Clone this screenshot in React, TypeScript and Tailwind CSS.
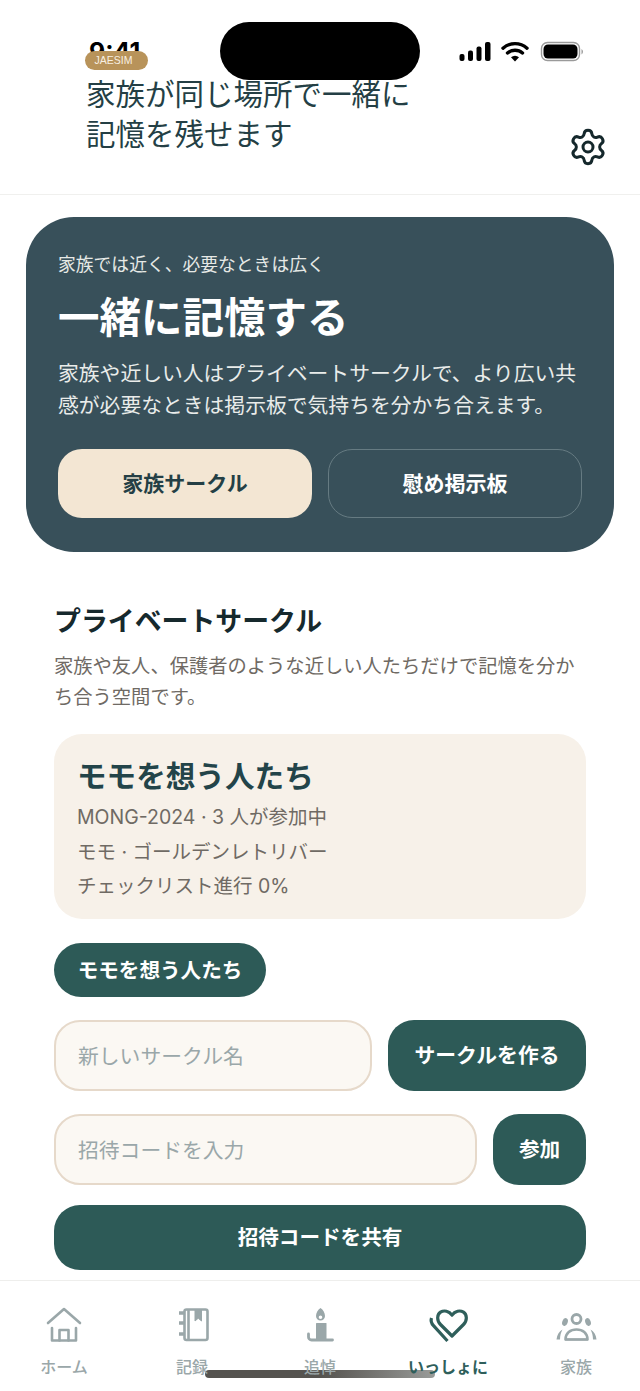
import { Settings } from "lucide-react";

const jp = "font-['Noto_Sans_CJK_JP','Noto_Sans',sans-serif]";

function StatusBar() {
  return (
    <div className="absolute inset-x-0 top-0 h-[80px]">
      {/* Time sits under the badge in the original capture */}
      <span className="absolute left-[89px] top-[37px] text-[25px] font-bold leading-[30px] text-black font-['Inter',sans-serif]">
        9:41
      </span>
      <div className="absolute left-[85px] top-[51px] flex h-[19px] w-[63px] items-center justify-center rounded-full bg-[#b8935a] pr-[6px]">
        <span className="text-[10.5px] leading-none text-[#f7efe2] font-['Liberation_Sans',sans-serif]">JAESIM</span>
      </div>
      <div className="absolute left-[220px] top-[22px] h-[58px] w-[200px] rounded-[29px] bg-black" />
      <svg className="absolute left-[458px] top-[40px]" width="128" height="24" viewBox="0 0 128 24" fill="black">
        <rect x="1.5" y="14" width="5" height="7" rx="2" />
        <rect x="10" y="10.5" width="5" height="10.5" rx="2" />
        <rect x="18.5" y="6.5" width="5" height="14.5" rx="2" />
        <rect x="27" y="2" width="5.5" height="19" rx="2" />
        <path d="M45 8.2a18 18 0 0 1 24 0" fill="none" stroke="black" strokeWidth="3.4" strokeLinecap="round" />
        <path d="M49.5 13a11.5 11.5 0 0 1 15 0" fill="none" stroke="black" strokeWidth="3.4" strokeLinecap="round" />
        <path d="M53 17.2a6 6 0 0 1 8 0L57 21.5z" />
        <rect x="83.500" y="2.500" width="38" height="18" rx="6" fill="none" stroke="#9a9a9a" strokeWidth="1.4" />
        <rect x="85.500" y="4.500" width="34" height="14" rx="4.500" />
        <path d="M123.500 9v5.500a3 3 0 0 0 1.500-2.700 3 3 0 0 0-1.500-2.800z" fill="#9a9a9a" />
      </svg>
    </div>
  );
}

function HomeIcon() {
  return (
    <svg width="40" height="40" viewBox="0 0 40 40" fill="none" stroke="#9aa7a9" strokeWidth="2.600" strokeLinecap="round" strokeLinejoin="round">
      <path d="M4 16 20 2l16 14" />
      <path d="M8 21v12.500h24V21" />
      <path d="M15.500 33.500V23h9v10.500" />
    </svg>
  );
}

function BookIcon() {
  return (
    <svg width="40" height="40" viewBox="0 0 40 40" fill="none" stroke="#9aa7a9" strokeWidth="2.600" strokeLinejoin="round">
      <rect x="12.500" y="2.500" width="23" height="30.500" rx="2" />
      <path d="M16.500 2.500V33" />
      <path d="M23 3h6.500v11l-3.250-2.800L23 14z" fill="#9aa7a9" strokeWidth="1" />
      <path d="M7 6h5M7 16h5M7 27h5" strokeWidth="3.600" />
    </svg>
  );
}

function CandleIcon() {
  return (
    <svg width="40" height="40" viewBox="0 0 40 40" fill="#9aa7a9">
      <path
        fillRule="evenodd"
        d="M20.500 1c2.700 1.500 4.500 5 4.500 8a4.500 4.500 0 0 1-9 0c0-3 1.800-6.500 4.500-8zM20.500 8.500a1.800 1.800 0 1 0 0 3.600 1.800 1.800 0 0 0 0-3.600z"
      />
      <rect x="16" y="16" width="10.500" height="18" rx="0.500" />
      <path d="M8.500 27v3a3 3 0 0 0 3 3H32.500" fill="none" stroke="#9aa7a9" strokeWidth="2.800" strokeLinecap="round" />
    </svg>
  );
}

function HeartIcon() {
  return (
    <svg width="40" height="40" viewBox="0 0 40 40" fill="none" stroke="#2f5f5b" strokeWidth="3.200" strokeLinejoin="round">
      <path d="M24 29 12.500 17.500C8.500 13.500 9 7.500 12.500 5.200 16 3 21 3.800 24 8.200 27 3.800 32 3 35.500 5.200 39 7.500 39.500 13.500 35.500 17.500z" />
      <path d="M3.500 11C2.500 14 3.300 16.300 5.500 18.700L19.500 34" />
    </svg>
  );
}

function FamilyIcon() {
  return (
    <svg width="42" height="40" viewBox="0 0 42 40" fill="#9aa7a9">
      <circle cx="21.500" cy="12" r="4.500" fill="none" stroke="#9aa7a9" strokeWidth="2.800" />
      <path d="M10.500 32.500c0-6.500 5-10 11-10s11 3.500 11 10z" fill="none" stroke="#9aa7a9" strokeWidth="2.600" strokeLinejoin="round" />
      <path d="M10 32.500h23" stroke="#9aa7a9" strokeWidth="2" />
      <ellipse cx="10" cy="15" rx="2.700" ry="4" transform="rotate(20 10 15)" />
      <ellipse cx="33" cy="15" rx="2.700" ry="4" transform="rotate(-20 33 15)" />
      <path d="M1.500 32.500c.500-4.500 2.500-8 6-10-1.500 2.800-2.500 6-2.500 10zM41.500 32.500c-.500-4.500-2.500-8-6-10 1.500 2.800 2.500 6 2.500 10z" />
    </svg>
  );
}

const tabs = [
  { label: "ホーム", icon: <HomeIcon /> },
  { label: "記録", icon: <BookIcon /> },
  { label: "追悼", icon: <CandleIcon /> },
  { label: "いっしょに", icon: <HeartIcon />, active: true },
  { label: "家族", icon: <FamilyIcon /> },
];

function BottomNav() {
  return (
    <nav className="mt-[10px] grid flex-1 grid-cols-5 border-t border-[#eeeeec] bg-white pt-[26px]">
      {tabs.map((t) => (
        <div key={t.label} className="flex flex-col items-center">
          <div className="flex h-[40px] items-center justify-center">{t.icon}</div>
          {/* Labels paint above the home indicator */}
          <span
            className={`relative z-10 mt-[7px] text-[16px] leading-[24px] ${
              t.active ? "font-semibold text-[#2f5f5b]" : "font-medium text-[#9aa7a9]"
            }`}
          >
            {t.label}
          </span>
        </div>
      ))}
    </nav>
  );
}

export default function App() {
  return (
    <div className={`relative flex h-[1391px] w-[640px] flex-col overflow-hidden bg-white ${jp}`}>
      {/* Header */}
      <header className="flex h-[195px] shrink-0 items-start justify-between border-b border-[#f0f0ee] pl-[86px] pr-[32px] pt-[72px]">
        <p className="w-[340px] text-[29.5px] leading-[40px] text-[#243f45]">
          家族が同じ場所で一緒に
          <br />
          記憶を残せます
        </p>
        <Settings className="mt-[55px] text-[#15282c]" size={40} strokeWidth={1.8} />
      </header>

      {/* Hero */}
      <section className="mx-[26px] mt-[22px] flex h-[335px] shrink-0 flex-col rounded-[48px] bg-[#38505a] px-[32px] pt-[32px]">
        <p className="text-[17.8px] leading-[28px] text-[#e6e9e6]">家族では近く、必要なときは広く</p>
        <h1 className="mt-[10px] text-[41.5px] font-bold leading-[56px] text-white">一緒に記憶する</h1>
        <p className="mt-[13px] text-[20.8px] leading-[32px] text-[#e9ecea]">
          家族や近しい人はプライベートサークルで、より広い共感が必要なときは掲示板で気持ちを分かち合えます。
        </p>
        <div className="mt-[29px] grid grid-cols-2 gap-[16px]">
          <button className="flex h-[69px] items-center justify-center rounded-[24px] bg-[#f3e6d3] pb-[2px] text-[21px] font-bold text-[#243f45]">
            家族サークル
          </button>
          <button className="flex h-[69px] items-center justify-center rounded-[24px] border border-[#667b82] pb-[2px] text-[21px] font-bold text-white">
            慰め掲示板
          </button>
        </div>
      </section>

      {/* Private circle */}
      <main className="flex shrink-0 flex-col px-[54px] pt-[48px]">
        <h2 className="text-[26.9px] font-bold leading-[40px] text-[#16292d]">プライベートサークル</h2>
        <p className="mt-[10px] text-[19.3px] leading-[31px] text-[#6f6a64]">
          家族や友人、保護者のような近しい人たちだけで記憶を分かち合う空間です。
        </p>

        <div className="mt-[22px] h-[185px] rounded-[28px] bg-[#f7f1e9] px-[23px] pt-[18px]">
          <h3 className="text-[29.6px] font-bold leading-[46px] text-[#234449]">モモを想う人たち</h3>
          <div className="mt-[2px] text-[19.5px] leading-[34.5px] text-[#6f6a64] font-['Inter','Noto_Sans_CJK_JP',sans-serif]">
            <p>MONG-2024 · 3 人が参加中</p>
            <p>モモ · ゴールデンレトリバー</p>
            <p>チェックリスト進行 0%</p>
          </div>
        </div>

        <button className="mt-[24px] flex h-[54px] w-[212px] items-center justify-center rounded-full bg-[#2d5a57] pb-[2px] text-[20.6px] font-semibold text-white">
          モモを想う人たち
        </button>

        <div className="mt-[23px] flex gap-[16px]">
          <input
            placeholder="新しいサークル名"
            className="h-[71px] min-w-0 flex-1 rounded-[26px] border-2 border-[#e6d9ca] bg-[#fbf8f3] px-[22px] pb-[2px] text-[20.8px] outline-none placeholder:text-[#9aa7a9]"
          />
          <button className="h-[71px] w-[198px] rounded-[26px] bg-[#2d5a57] pb-[2px] text-[20.8px] font-bold text-white">
            サークルを作る
          </button>
        </div>

        <div className="mt-[23px] flex gap-[16px]">
          <input
            placeholder="招待コードを入力"
            className="h-[71px] min-w-0 flex-1 rounded-[26px] border-2 border-[#e6d9ca] bg-[#fbf8f3] px-[22px] pb-[2px] text-[20.8px] outline-none placeholder:text-[#9aa7a9]"
          />
          <button className="h-[71px] w-[93px] rounded-[26px] bg-[#2d5a57] pb-[2px] text-[20.6px] font-bold text-white">
            参加
          </button>
        </div>

        <button className="mt-[20px] h-[65px] w-full rounded-[26px] bg-[#2d5a57] pb-[2px] text-[20.6px] font-bold text-white">
          招待コードを共有
        </button>
      </main>

      <BottomNav />

      <StatusBar />
      <div className="absolute left-[205px] top-[1370px] h-[8px] w-[230px] rounded-full bg-gradient-to-r from-[#55534f] via-[#55534f] to-[#9a9c9a]" />
    </div>
  );
}
